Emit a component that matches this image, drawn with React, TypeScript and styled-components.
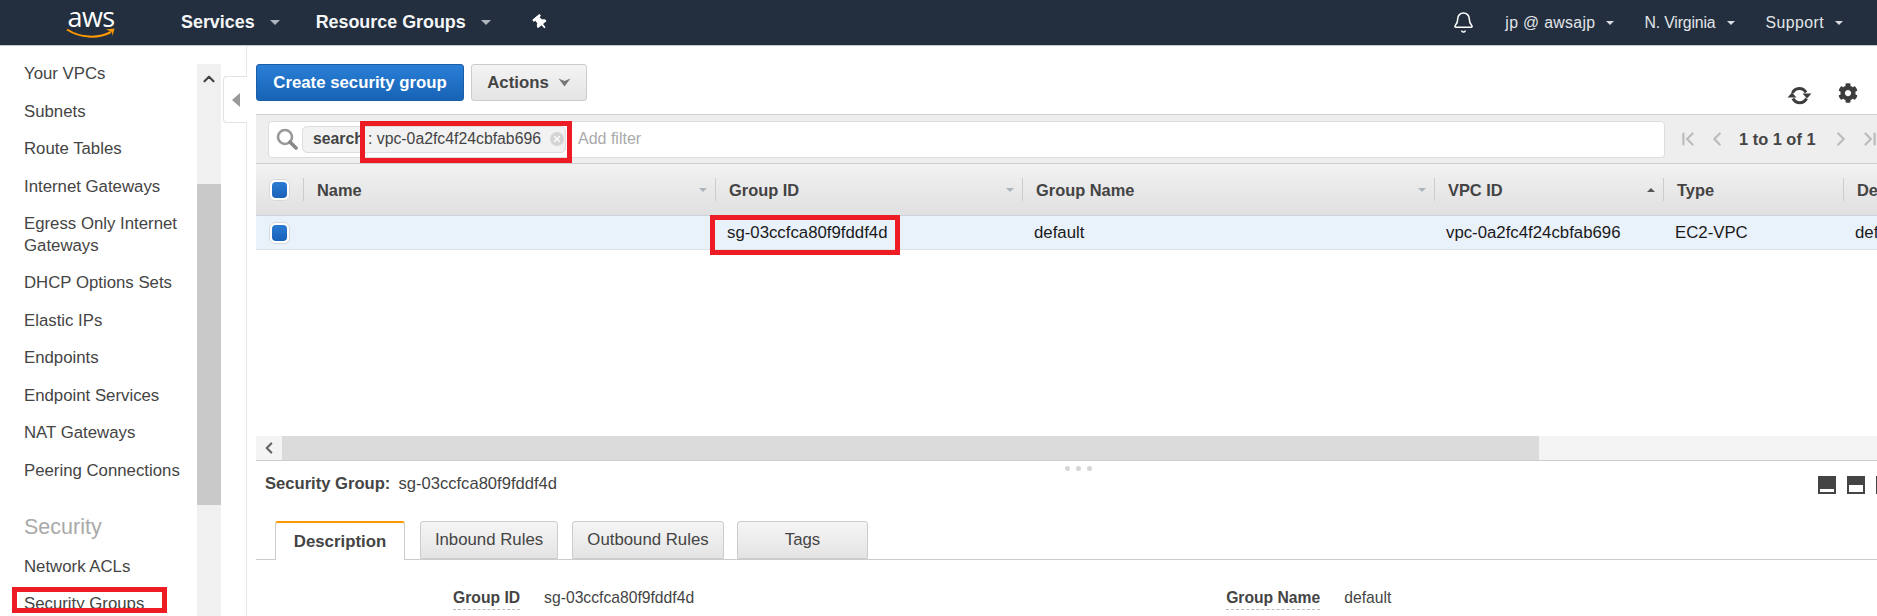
import styled, { createGlobalStyle } from "styled-components";
import { Bell, ChevronFirst, ChevronLast, ChevronLeft, ChevronRight, ChevronUp, X } from "lucide-react";
import { FaCog, FaThumbtack } from "react-icons/fa";

const GlobalStyle = createGlobalStyle`
  html, body {
    margin: 0;
    padding: 0;
    background: #fff;
    overflow: hidden;
  }
  * {
    box-sizing: border-box;
  }
`;

const Page = styled.div`
  width: 1877px;
  height: 616px;
  display: flex;
  flex-direction: column;
  overflow: hidden;
  font-family: "Liberation Sans", Arial, sans-serif;
  color: #444;
`;

const TopBar = styled.header`
  height: 46px;
  flex: none;
  display: flex;
  align-items: center;
  background: #232f3e;
  border-bottom: 1px solid #c8c8c8;
  color: #fff;
`;

const Logo = styled.div`
  width: 50px;
  height: 40px;
  margin: 0 65px 0 66px;
  display: flex;
  flex-direction: column;
  align-items: center;
`;

const LogoText = styled.span`
  font-family: "Open Sans", sans-serif;
  font-size: 27px;
  line-height: 32px;
  letter-spacing: -0.6px;
  height: 32px;
  margin-top: -2px;
  margin-bottom: -6px;
  color: #fff;
`;

const MainNav = styled.div<{ $gap: number }>`
  display: flex;
  align-items: center;
  font-size: 17.9px;
  font-weight: bold;
  color: #f4f6f8;
  margin-right: ${(p) => p.$gap}px;
`;

const UserNav = styled.div<{ $gap: number; $ls: number }>`
  display: flex;
  align-items: center;
  font-size: 15.8px;
  letter-spacing: ${(p) => p.$ls}px;
  color: #e2e6ea;
  margin-right: ${(p) => p.$gap}px;
`;

const Caret = styled.span<{ $color?: string; $size?: number; $up?: boolean; $ml?: number }>`
  display: inline-block;
  flex: none;
  width: 0;
  height: 0;
  margin-left: ${(p) => p.$ml ?? 0}px;
  border-left: ${(p) => p.$size ?? 5}px solid transparent;
  border-right: ${(p) => p.$size ?? 5}px solid transparent;
  ${(p) => (p.$up ? "border-bottom" : "border-top")}: ${(p) => p.$size ?? 5}px solid ${(p) => p.$color ?? "#aeb4bc"};
`;

const PinIcon = styled(FaThumbtack)`
  font-size: 15px;
  color: #fff;
  transform: rotate(-40deg);
`;

const RightNav = styled.div`
  margin-left: auto;
  display: flex;
  align-items: center;
`;

const BellIcon = styled(Bell)`
  margin-right: 30px;
  color: #fff;
`;

const Body = styled.div`
  flex: 1;
  min-height: 0;
  display: flex;
`;

const Sidebar = styled.aside`
  position: relative;
  width: 247px;
  flex: none;
  display: flex;
  border-right: 1px solid #e8e8e8;
`;

const SideNav = styled.nav`
  width: 197px;
  flex: none;
  padding: 17px 0 0 24px;
`;

const SideItem = styled.div`
  position: relative;
  padding-bottom: 16px;
  font-size: 16.8px;
  line-height: 21.5px;
  color: #444;
`;

const SideHeading = styled.div`
  padding-top: 10px;
  height: 58.5px;
  font-size: 21.5px;
  line-height: 40px;
  color: #aaa;
`;

const SideScroll = styled.div`
  width: 24px;
  flex: none;
  margin-top: 18px;
  background: #f0f0f0;
`;

const ScrollUp = styled.div`
  height: 120px;
  display: flex;
  justify-content: center;
  align-items: flex-start;
  padding-top: 6px;
  color: #444;
`;

const ScrollThumb = styled.div`
  height: 321px;
  background: #c9c9c9;
`;

const Collapse = styled.div`
  position: absolute;
  right: -1px;
  top: 30px;
  width: 24px;
  height: 47px;
  background: #fff;
  border: 1px solid #e2e2e2;
  border-right: 0;
  border-radius: 4px 0 0 4px;
  display: flex;
  align-items: center;
  justify-content: center;
`;

const LeftTriangle = styled.span`
  width: 0;
  height: 0;
  border-top: 7px solid transparent;
  border-bottom: 7px solid transparent;
  border-right: 8px solid #999;
`;

const Main = styled.main`
  flex: 1;
  min-width: 0;
  padding-left: 9px;
  display: flex;
  flex-direction: column;
  overflow: hidden;
`;

const Toolbar = styled.div`
  height: 68px;
  flex: none;
  padding-top: 18px;
  display: flex;
  align-items: flex-start;
`;

const PrimaryButton = styled.button`
  width: 208px;
  height: 37px;
  border: 1px solid #1a5ea8;
  border-radius: 3px;
  background: linear-gradient(#2a7fd6, #1763b6);
  color: #fff;
  font: bold 16.8px "Liberation Sans", Arial, sans-serif;
  padding: 0;
`;

const SecondaryButton = styled.button`
  width: 116px;
  height: 37px;
  margin-left: 7px;
  border: 1px solid #ccc;
  border-radius: 3px;
  background: linear-gradient(#f4f4f4, #e4e4e4);
  color: #444;
  font: bold 16.8px "Liberation Sans", Arial, sans-serif;
  padding: 0;
  display: flex;
  align-items: center;
  justify-content: center;
  gap: 9px;
`;

const ToolIcons = styled.div`
  margin-left: auto;
  padding: 19px 19px 0 0;
  display: flex;
  align-items: flex-start;
  gap: 26px;
  color: #3d3d3d;
`;

const RefreshIcon = styled.svg`
  margin-top: 3px;
`;

const GearIcon = styled(FaCog)`
  font-size: 20px;
`;

const FilterBar = styled.div`
  position: relative;
  height: 50px;
  flex: none;
  display: flex;
  align-items: center;
  padding: 0 0 0 12px;
  background: #eeeeee;
  border-top: 1px solid #cfcfcf;
  border-bottom: 1px solid #cfcfcf;
`;

const FilterInput = styled.div`
  width: 1397px;
  height: 37px;
  flex: none;
  display: flex;
  align-items: center;
  background: #fff;
  border: 1px solid #ddd;
  border-radius: 4px;
  padding-left: 7px;
`;

const SearchGlass = styled.svg`
  flex: none;
`;

const FilterTag = styled.div`
  width: 264px;
  height: 27px;
  margin-left: 4px;
  flex: none;
  display: flex;
  align-items: center;
  padding-left: 10px;
  background: #f2f2f2;
  border: 1px solid #ddd;
  border-radius: 5px;
  font-size: 15.8px;
  white-space: nowrap;
  overflow: hidden;
`;

const TagKey = styled.b`
  width: 55px;
  flex: none;
  color: #444;
`;

const TagValue = styled.span`
  color: #444;
`;

const TagClear = styled.span`
  width: 14px;
  height: 14px;
  margin-left: 9px;
  flex: none;
  border-radius: 50%;
  background: #d4d4d4;
  color: #fff;
  display: flex;
  align-items: center;
  justify-content: center;
`;

const AddFilter = styled.span`
  margin-left: 12px;
  font-size: 16px;
  color: #aaa;
`;

const Pager = styled.div`
  margin-left: 12px;
  display: flex;
  align-items: center;
  gap: 7px;
  color: #bbb;
  flex: none;
`;

const PagerText = styled.b`
  margin: 0 7px 0 4px;
  font-size: 16.4px;
  color: #444;
  white-space: nowrap;
`;

const columns = "47px 412px 307px 412px 229px 180px 300px";

const HeadRow = styled.div`
  height: 52px;
  flex: none;
  display: grid;
  grid-template-columns: ${columns};
  align-items: center;
  background: linear-gradient(#f2f2f2, #e0e0e0);
  border-bottom: 1px solid #ccd3db;
`;

const HeadCell = styled.div`
  height: 23px;
  display: flex;
  align-items: center;
  padding: 1px 8px 0 13px;
  border-left: 1px solid #ccc;
  font-size: 16.4px;
  font-weight: bold;
  color: #444;
`;

const HeadLabel = styled.span`
  flex: 1;
  white-space: nowrap;
`;

const CheckCell = styled.div`
  display: flex;
  padding-left: 13px;
`;

const CheckBox = styled.span`
  width: 21px;
  height: 22px;
  padding: 2px;
  display: block;
  background: #fff;
  border: 1px solid #d8d8d8;
  border-radius: 6px;
`;

const CheckMark = styled.span`
  display: block;
  width: 100%;
  height: 100%;
  border-radius: 4px;
  background: linear-gradient(#2a7bd4, #1a62b8);
`;

const DataRow = styled.div`
  height: 34px;
  flex: none;
  display: grid;
  grid-template-columns: ${columns};
  align-items: center;
  background: #e9f1fb;
  border-bottom: 1px solid #dce1e6;
`;

const DataCell = styled.div`
  position: relative;
  padding-left: 12px;
  font-size: 16.8px;
  color: #1a1a1a;
  white-space: nowrap;
`;

const TableSpace = styled.div`
  flex: 1;
  min-height: 0;
`;

const HScroll = styled.div`
  height: 25px;
  flex: none;
  display: flex;
  background: #f4f4f4;
  border-bottom: 1px solid #ccc;
`;

const HScrollButton = styled.div`
  width: 26px;
  display: flex;
  align-items: center;
  justify-content: center;
  color: #666;
`;

const HScrollThumb = styled.div`
  width: 1257px;
  height: 24px;
  background: #dbdbdb;
`;

const Detail = styled.section`
  position: relative;
  height: 155px;
  flex: none;
`;

const DetailTitle = styled.div`
  height: 61px;
  padding: 14px 0 0 9px;
  font-size: 16.6px;
  line-height: 18px;
  white-space: nowrap;
  color: #444;
`;

const DetailKey = styled.b`
  font-size: 16.6px;
  margin-right: 8px;
`;

const Dots = styled.div`
  position: absolute;
  top: 5px;
  left: 809px;
  display: flex;
  gap: 6px;
`;

const Dot = styled.span`
  width: 5px;
  height: 5px;
  border-radius: 50%;
  background: #d6d6d6;
`;

const PanelIcons = styled.div`
  position: absolute;
  top: 15px;
  left: 1562px;
  display: flex;
  gap: 11px;
`;

const Tabs = styled.div`
  height: 38px;
  display: flex;
  align-items: flex-end;
  padding-left: 19px;
  border-bottom: 1px solid #ccc;
`;

const Tab = styled.div<{ $active?: boolean; $w: number; $mr: number }>`
  width: ${(p) => p.$w}px;
  height: ${(p) => (p.$active ? 39 : 38)}px;
  margin-right: ${(p) => p.$mr}px;
  margin-bottom: ${(p) => (p.$active ? -1 : 0)}px;
  display: flex;
  align-items: center;
  justify-content: center;
  font-size: 16.8px;
  font-weight: ${(p) => (p.$active ? "bold" : "normal")};
  color: #444;
  border: 1px solid #ccc;
  border-bottom: ${(p) => (p.$active ? "0" : "1px solid #ccc")};
  border-top: ${(p) => (p.$active ? "2px solid #f90" : "1px solid #ccc")};
  border-radius: 3px 3px 0 0;
  background: ${(p) => (p.$active ? "#fff" : "linear-gradient(#f5f5f5, #e4e4e4)")};
`;

const Fields = styled.div`
  display: flex;
  padding-top: 28px;
  font-size: 15.7px;
  line-height: 20px;
`;

const FieldLabel = styled.span<{ $ml: number }>`
  margin-left: ${(p) => p.$ml}px;
  padding-bottom: 2px;
  height: 22px;
  font-weight: bold;
  color: #444;
  border-bottom: 1px dashed #bbb;
`;

const FieldValue = styled.span<{ $ml: number }>`
  margin-left: ${(p) => p.$ml}px;
  color: #444;
`;

const Highlight = styled.div<{ $l: number; $t: number; $w: number; $h: number }>`
  position: absolute;
  left: ${(p) => p.$l}px;
  top: ${(p) => p.$t}px;
  width: ${(p) => p.$w}px;
  height: ${(p) => p.$h}px;
  border: 5px solid #ed1c24;
  z-index: 5;
`;

const menu = [
  "Your VPCs",
  "Subnets",
  "Route Tables",
  "Internet Gateways",
  "Egress Only Internet Gateways",
  "DHCP Options Sets",
  "Elastic IPs",
  "Endpoints",
  "Endpoint Services",
  "NAT Gateways",
  "Peering Connections",
];

const heads = ["Name", "Group ID", "Group Name", "VPC ID", "Type", "Description"];

function PanelIcon({ bar }: { bar: number }) {
  return (
    <svg width="18" height="18" viewBox="0 0 18 18">
      <rect width="18" height="18" fill="#444" />
      <rect x="2" y={16 - bar} width="14" height={bar} fill="#fff" />
    </svg>
  );
}

function Check() {
  return (
    <CheckBox>
      <CheckMark />
    </CheckBox>
  );
}

function App() {
  return (
    <Page>
      <GlobalStyle />
      <TopBar>
        <Logo>
          <LogoText>aws</LogoText>
          <svg width="50" height="14" viewBox="0 0 50 14">
            <path d="M1 2.5C14 11 32 12 45 5" fill="none" stroke="#f90" strokeWidth="2" />
            <path d="M40 2.5L48.5 1.5L46.5 9L46 5L40 2.5Z" fill="#f90" />
          </svg>
        </Logo>
        <MainNav $gap={36}>
          Services
          <Caret $ml={15} />
        </MainNav>
        <MainNav $gap={42}>
          Resource Groups
          <Caret $ml={15} />
        </MainNav>
        <PinIcon />
        <RightNav>
          <BellIcon size={23} strokeWidth={1.6} />
          <UserNav $gap={30} $ls={0.35}>
            jp @ awsajp
            <Caret $ml={11} $size={4.5} $color="#d8dce0" />
          </UserNav>
          <UserNav $gap={31} $ls={-0.14}>
            N. Virginia
            <Caret $ml={11} $size={4.5} $color="#d8dce0" />
          </UserNav>
          <UserNav $gap={34} $ls={0.45}>
            Support
            <Caret $ml={11} $size={4.5} $color="#d8dce0" />
          </UserNav>
        </RightNav>
      </TopBar>
      <Body>
        <Sidebar>
          <SideNav>
            {menu.map((m) => (
              <SideItem key={m}>{m}</SideItem>
            ))}
            <SideHeading>Security</SideHeading>
            <SideItem>Network ACLs</SideItem>
            <SideItem>
              Security Groups
              <Highlight $l={-12} $t={-6} $w={155} $h={26} />
            </SideItem>
          </SideNav>
          <SideScroll>
            <ScrollUp>
              <ChevronUp size={18} strokeWidth={3} />
            </ScrollUp>
            <ScrollThumb />
          </SideScroll>
          <Collapse>
            <LeftTriangle />
          </Collapse>
        </Sidebar>
        <Main>
          <Toolbar>
            <PrimaryButton>Create security group</PrimaryButton>
            <SecondaryButton>
              Actions
              <svg width="13" height="9" viewBox="0 0 13 9">
                <path d="M0.5 0.5L6.5 3L12.5 0.5L6.5 8.5Z" fill="#777" />
              </svg>
            </SecondaryButton>
            <ToolIcons>
              <RefreshIcon width="25" height="19" viewBox="0 0 25 19">
                <path d="M5.5 7A7.5 7.5 0 0 1 19 6.5" fill="none" stroke="currentColor" strokeWidth="3" />
                <path d="M19.5 12.5A7.5 7.5 0 0 1 6 12.5" fill="none" stroke="currentColor" strokeWidth="3" />
                <path d="M15.5 7.5H24.5L20 12.5Z" fill="currentColor" />
                <path d="M0.5 11.5H9.5L5 6.5Z" fill="currentColor" />
              </RefreshIcon>
              <GearIcon />
            </ToolIcons>
          </Toolbar>
          <FilterBar>
            <FilterInput>
              <SearchGlass width="22" height="22" viewBox="0 0 22 22">
                <circle cx="9" cy="9" r="7" fill="none" stroke="#999" strokeWidth="2.6" />
                <path d="M14 14L20 20" stroke="#888" strokeWidth="3.6" strokeLinecap="round" />
              </SearchGlass>
              <FilterTag>
                <TagKey>search</TagKey>
                <TagValue>: vpc-0a2fc4f24cbfab696</TagValue>
                <TagClear>
                  <X size={10} strokeWidth={3} />
                </TagClear>
              </FilterTag>
              <AddFilter>Add filter</AddFilter>
            </FilterInput>
            <Pager>
              <ChevronFirst size={22} strokeWidth={2.4} />
              <ChevronLeft size={22} strokeWidth={2.4} />
              <PagerText>1 to 1 of 1</PagerText>
              <ChevronRight size={22} strokeWidth={2.4} />
              <ChevronLast size={22} strokeWidth={2.4} />
            </Pager>
            <Highlight $l={104} $t={6} $w={212} $h={42} />
          </FilterBar>
          <HeadRow>
            <CheckCell>
              <Check />
            </CheckCell>
            {heads.map((h) => (
              <HeadCell key={h}>
                <HeadLabel>{h}</HeadLabel>
                {h === "VPC ID" && <Caret $up $size={4.5} $color="#555" />}
                {h !== "VPC ID" && h !== "Type" && h !== "Description" && <Caret $size={4.5} />}
              </HeadCell>
            ))}
          </HeadRow>
          <DataRow>
            <CheckCell>
              <Check />
            </CheckCell>
            <DataCell />
            <DataCell>
              sg-03ccfca80f9fddf4d
              <Highlight $l={-5} $t={-8} $w={190} $h={40} />
            </DataCell>
            <DataCell>default</DataCell>
            <DataCell>vpc-0a2fc4f24cbfab696</DataCell>
            <DataCell>EC2-VPC</DataCell>
            <DataCell>default VPC security group</DataCell>
          </DataRow>
          <TableSpace />
          <HScroll>
            <HScrollButton>
              <ChevronLeft size={18} strokeWidth={3} />
            </HScrollButton>
            <HScrollThumb />
          </HScroll>
          <Detail>
            <Dots>
              <Dot />
              <Dot />
              <Dot />
            </Dots>
            <PanelIcons>
              <PanelIcon bar={3} />
              <PanelIcon bar={7} />
              <PanelIcon bar={14} />
            </PanelIcons>
            <DetailTitle>
              <DetailKey>Security Group:</DetailKey>sg-03ccfca80f9fddf4d
            </DetailTitle>
            <Tabs>
              <Tab $active $w={130} $mr={15}>
                Description
              </Tab>
              <Tab $w={138} $mr={14}>
                Inbound Rules
              </Tab>
              <Tab $w={152} $mr={13}>
                Outbound Rules
              </Tab>
              <Tab $w={131} $mr={0}>
                Tags
              </Tab>
            </Tabs>
            <Fields>
              <FieldLabel $ml={197}>Group ID</FieldLabel>
              <FieldValue $ml={24}>sg-03ccfca80f9fddf4d</FieldValue>
              <FieldLabel $ml={532}>Group Name</FieldLabel>
              <FieldValue $ml={24}>default</FieldValue>
            </Fields>
          </Detail>
        </Main>
      </Body>
    </Page>
  );
}

export default App;
